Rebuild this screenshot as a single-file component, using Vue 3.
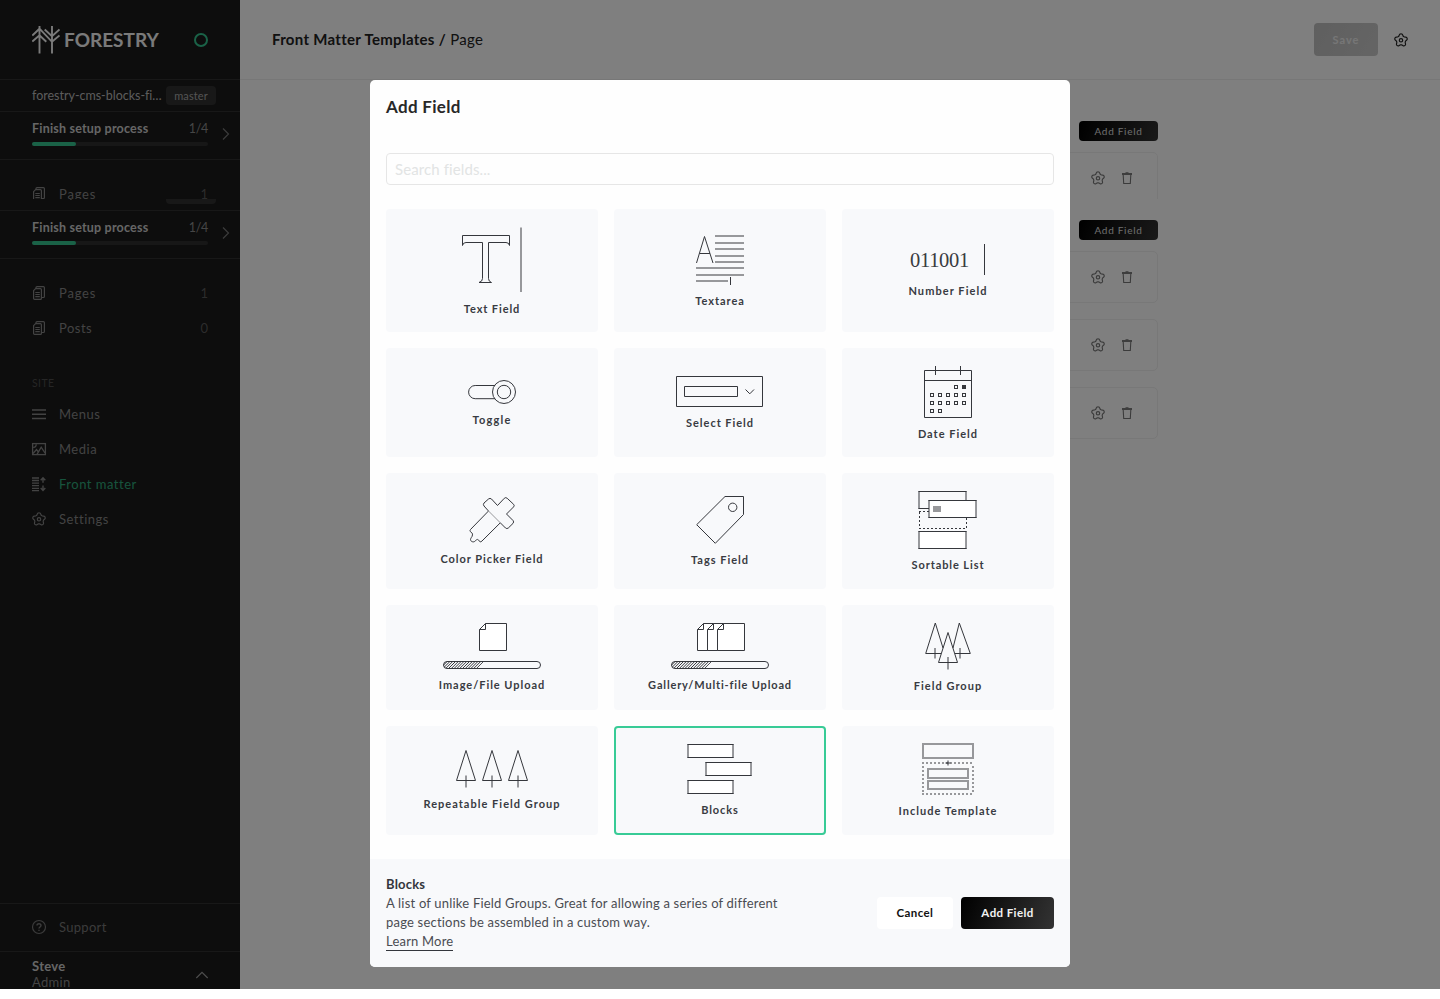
<script setup>
const mainLinks = [
  { label: 'Pages', count: '1' },
  { label: 'Posts', count: '0' }
]
const siteLinks = [
  { label: 'Menus', icon: 'menu' },
  { label: 'Media', icon: 'media' },
  { label: 'Front matter', icon: 'matter', active: true },
  { label: 'Settings', icon: 'gear' }
]
const tiles = [
  { id: 'text', label: 'Text Field', h: 92, ls: 0.9 },
  { id: 'textarea', label: 'Textarea', h: 84, ls: 0.95 },
  { id: 'number', label: 'Number Field', h: 74, ls: 1.07 },
  { id: 'toggle', label: 'Toggle', h: 64, ls: 1.2 },
  { id: 'select', label: 'Select Field', h: 67, ls: 0.95 },
  { id: 'date', label: 'Date Field', h: 78, ls: 1 },
  { id: 'color', label: 'Color Picker Field', h: 78, ls: 0.96 },
  { id: 'tags', label: 'Tags Field', h: 79, ls: 1 },
  { id: 'sortable', label: 'Sortable List', h: 84, ls: 0.9 },
  { id: 'image', label: 'Image/File Upload', h: 72, ls: 0.96 },
  { id: 'gallery', label: 'Gallery/Multi-file Upload', h: 72, ls: 0.84 },
  { id: 'group', label: 'Field Group', h: 73, ls: 1.03 },
  { id: 'repeat', label: 'Repeatable Field Group', h: 70, ls: 1.03 },
  { id: 'blocks', label: 'Blocks', h: 76, ls: 0.9, selected: true },
  { id: 'include', label: 'Include Template', h: 77, ls: 1 }
]
const dayCells = [
  [114, 39], [90, 47], [98, 47], [106, 47], [114, 47], [122, 47],
  [90, 55], [98, 55], [106, 55], [114, 55], [122, 55], [90, 63], [98, 63]
]
const textLines = [[101, 27], [101, 34], [101, 40], [101, 47], [101, 53], [82, 59], [82, 66]]
const hatch = Array.from({ length: 18 }, (_, i) => 48 + i * 2.8)

// Five-petal outline: a circle whose radius swells once per petal.
const gear = 'M' + Array.from({ length: 60 }, (_, i) => {
  const a = (i / 60) * Math.PI * 2
  const c = Math.cos(5 * a)
  const r = 5.5 + 0.95 * Math.sign(c) * Math.pow(Math.abs(c), 0.6)
  return `${(8 + r * Math.sin(a)).toFixed(2)} ${(8.3 - r * Math.cos(a)).toFixed(2)}`
}).join('L') + 'Z'
</script>

<template>
  <div class="app">
    <svg class="defs" width="0" height="0" aria-hidden="true">
      <symbol id="i-gear" viewBox="0 0 16 16">
        <path :d="gear" fill="none" stroke="currentColor" stroke-width="1.150" stroke-linejoin="round" />
        <circle cx="8" cy="8.300" r="1.700" fill="none" stroke="currentColor" stroke-width="1.200" />
      </symbol>
      <symbol id="i-pages" viewBox="0 0 16 16">
        <g fill="none" stroke="currentColor" stroke-width="1.200">
          <path d="M2.600 5.600 4.600 3.600H9.400a1 1 0 0 1 1 1V13.400a1 1 0 0 1-1 1H3.600a1 1 0 0 1-1-1z" />
          <path d="M5 3V2.600a1 1 0 0 1 1-1H12.400a1 1 0 0 1 1 1V11.500a1 1 0 0 1-1 1H11" />
          <path d="M4.300 7.500h4.500M4.300 9.500h4.500M4.300 11.700h4.500" />
        </g>
      </symbol>
      <symbol id="i-menu" viewBox="0 0 16 16">
        <path d="M1 4h14M1 8.300h14M1 12.500h14" stroke="currentColor" stroke-width="1.600" />
      </symbol>
      <symbol id="i-media" viewBox="0 0 16 16">
        <g fill="none" stroke="currentColor" stroke-width="1.300">
          <rect x="1.600" y="2.600" width="12.800" height="11" />
          <path d="M2 12.500 5.500 8.500 7 10.500M6 13.300 10.200 6.200 14 12" />
          <path d="M2.200 6.300c1.800.2 3-.8 3-3" />
        </g>
      </symbol>
      <symbol id="i-matter" viewBox="0 0 16 16">
        <path d="M1 2h7M1 4.500h7M1 7.100h7M1 9.700h7M1 12.300h7M1 14.600h7" stroke="currentColor" stroke-width="1.300" />
        <path d="M12 2v4.700M9.700 4.300 12 1.800l2.300 2.500M12 9.500V14M9.700 12 12 14.400l2.300-2.400" fill="none" stroke="currentColor" stroke-width="1.400" />
      </symbol>
      <symbol id="i-trash" viewBox="0 0 12 14">
        <path d="M1 3h10" stroke="currentColor" stroke-width="1.900" />
        <path d="M4.500 1.700h3M2.200 4l.5 8.500h6.600l.5-8.500" fill="none" stroke="currentColor" stroke-width="1.100" />
      </symbol>
    </svg>

    <aside class="sidebar">
      <div class="brand">
        <svg class="tree-logo" width="28" height="28" viewBox="0 0 28 28" fill="none" stroke="currentColor" stroke-width="1.900">
          <path d="M7.500 0v27.500M20 0v27.500M.3 9.500 7.500 2.700 20 15.800 27.500 9.500M.3 15.600 7.500 9.200 14.300 15.800M12.700 3.500 20 10.200 27.500 3.500" />
        </svg>
        <span class="brand-name">FORESTRY</span>
        <span class="ring"></span>
      </div>
      <div class="repo">
        <span class="repo-name">forestry-cms-blocks-fi…</span>
        <span class="badge">master</span>
      </div>
      <div class="setup">
        <div class="setup-body">
          <div class="setup-line"><b>Finish setup process</b><span>1/4</span></div>
          <div class="bar"><i></i></div>
        </div>
        <svg class="chev" width="8" height="14" viewBox="0 0 8 14"><path d="M1 1.500 6.500 7 1 12.500" /></svg>
      </div>
      <div class="clip-nav">
        <div class="nav-item">
          <svg width="16" height="16"><use href="#i-pages" /></svg><span>Pages</span><em>1</em>
        </div>
      </div>
      <div class="repo repo-tail">
        <span class="repo-name">forestry-cms-blocks-fi…</span>
        <span class="badge"></span>
      </div>
      <div class="setup">
        <div class="setup-body">
          <div class="setup-line"><b>Finish setup process</b><span>1/4</span></div>
          <div class="bar"><i></i></div>
        </div>
        <svg class="chev" width="8" height="14" viewBox="0 0 8 14"><path d="M1 1.500 6.500 7 1 12.500" /></svg>
      </div>
      <nav class="nav">
        <div v-for="l in mainLinks" :key="l.label" class="nav-item">
          <svg width="16" height="16"><use href="#i-pages" /></svg><span>{{ l.label }}</span><em>{{ l.count }}</em>
        </div>
        <div class="nav-head">SITE</div>
        <div v-for="l in siteLinks" :key="l.label" class="nav-item" :class="{ active: l.active }">
          <svg width="16" height="16"><use :href="'#i-' + l.icon" /></svg><span>{{ l.label }}</span>
        </div>
      </nav>
      <div class="support">
        <svg width="16" height="16" viewBox="0 0 16 16" fill="none" stroke="currentColor" stroke-width="1.200">
          <circle cx="8" cy="8" r="6.500" />
          <path d="M6 6.600c0-2.600 4-2.500 4 0 0 1.400-2 1.400-2 3M8 10.700v1.200" stroke-width="1.400" />
        </svg>
        <span>Support</span>
      </div>
      <div class="user">
        <div><b>Steve</b><span>Admin</span></div>
        <svg width="14" height="8" viewBox="0 0 14 8"><path d="M1.300 7 7 1.300 12.700 7" /></svg>
      </div>
    </aside>

    <main class="main">
      <header class="top">
        <h1><b>Front Matter Templates /</b> Page</h1>
        <button class="save">Save</button>
        <svg width="16" height="16"><use href="#i-gear" /></svg>
      </header>
      <div class="column first">
        <button class="add">Add Field</button>
        <div class="row">
          <svg width="16" height="16"><use href="#i-gear" /></svg>
          <svg width="12" height="14"><use href="#i-trash" /></svg>
        </div>
      </div>
      <div class="column">
        <button class="add">Add Field</button>
        <div v-for="n in 3" :key="n" class="row">
          <svg width="16" height="16"><use href="#i-gear" /></svg>
          <svg width="12" height="14"><use href="#i-trash" /></svg>
        </div>
      </div>
    </main>

    <div class="overlay">
      <section class="modal">
        <h2>Add Field</h2>
        <input class="search" placeholder="Search fields..." />
        <div class="grid">
          <div v-for="t in tiles" :key="t.id" class="tile" :class="{ selected: t.selected }">
            <svg class="art" width="212" :height="t.h" :viewBox="'0 0 212 ' + t.h">
              <g v-if="t.id === 'text'">
                <path d="M76.500 26.500H123.500V36.500Q123 33.500 120 33.500H102.500V69.500Q102.500 72.500 105.500 73.500H93Q96.500 72.500 96.500 69.500V33.500H80Q77 33.500 76.500 36.500Z" />
                <path class="soft" d="M135 18.500V83" />
              </g>
              <g v-else-if="t.id === 'textarea'">
                <path v-for="(l, i) in textLines" :key="i" class="soft" :d="`M${l[0]} ${l[1]}H130`" />
                <path class="soft" d="M82 72H114" />
                <path d="M116.500 68V76M82.500 54 90.500 27.500 99 54M85.500 44.500H96" />
              </g>
              <g v-else-if="t.id === 'number'">
                <text x="68" y="58">011001</text>
                <path d="M142.500 35V66" />
              </g>
              <g v-else-if="t.id === 'toggle'">
                <path d="M109 37.500H89.200a6.600 6.600 0 0 0 0 13.200H109" />
                <circle cx="118" cy="44" r="11.500" /><circle cx="118" cy="44" r="6.700" />
              </g>
              <g v-else-if="t.id === 'select'">
                <path d="M62.500 28.500H148.500V58.500H62.500ZM70.500 38.500H123.500V48.500H70.500ZM131.500 41.500 135.800 45.800 140 41.500" />
              </g>
              <g v-else-if="t.id === 'date'">
                <path d="M82.500 22.500H129.500V69.500H82.500ZM82.500 32.500H129.500M93.500 18V27M118.500 18V27" />
                <rect v-for="(c, i) in dayCells" :key="i" :x="c[0] - 1.5" :y="c[1] - 1.5" width="3" height="3" />
                <rect class="solid" x="120.500" y="37.500" width="3" height="3" />
              </g>
              <g v-else-if="t.id === 'color'">
                <path d="M98 33Q96.800 31.500 98 30L102.500 26Q104 24.700 105.500 26L111.500 32.500 118.300 25.300Q119.700 23.900 121.200 25.300L127.600 31.300Q128.800 32.500 127.600 33.900L120.500 41 127 47.500Q128.300 49 127 50.400L122.300 55Q120.800 56.200 119.500 55L114.300 49.800 96 68C94.700 69.300 93.700 69 93.200 67.800 91.500 65.500 90.500 66.500 89.500 67.800 88 69.300 86.500 69 85.500 68.300 83.500 67 85 65 86 63.500 87 61 86.500 60.200 85 59.200 83.500 58.200 84 57 84.500 56.500L102.500 38Z" />
                <path class="faint" d="M102.500 38 114.300 49.800" />
              </g>
              <g v-else-if="t.id === 'tags'">
                <path d="M111 23.500H129.500V41.500L101.300 70.300 82.700 51.700Z" />
                <circle cx="118.700" cy="34.300" r="4.200" />
              </g>
              <g v-else-if="t.id === 'sortable'">
                <path d="M76.500 18.500H124.500M76.500 35.500H87" /><path class="side" d="M77 18V36M124 18V27" />
                <path class="dots" d="M77 38.500H87M77 55.500H125M77.500 39V56M124.500 45V56" />
                <rect class="plain" x="87" y="27" width="47" height="18" />
                <path d="M86.500 27.500H134.500M86.500 44.500H134.500" /><path class="side" d="M87 27V45M134 27V45" />
                <rect class="grayfill" x="91" y="33" width="8" height="6" />
                <rect class="plain" x="77" y="58" width="47" height="18" />
                <path d="M76.500 58.500H124.500M76.500 75.500H124.500" /><path class="side" d="M77 58V76M124 58V76" />
              </g>
              <g v-else-if="t.id === 'image' || t.id === 'gallery'">
                <template v-if="t.id === 'image'">
                  <path class="paper" d="M99.500 18.500H120.500V45.500H93.500V24.500Z" /><path d="M99.500 18.500V24.500H93.500" />
                </template>
                <template v-else>
                  <path class="paper" d="M89.500 18.500H110.500V45.500H83.500V24.500Z" /><path d="M89.500 18.500V24.500H83.500" />
                  <path class="paper" d="M99.500 18.500H120.500V45.500H93.500V24.500Z" /><path d="M99.500 18.500V24.500H93.500" />
                  <path class="paper" d="M109.500 18.500H130.500V45.500H103.500V24.500Z" /><path d="M109.500 18.500V24.500H103.500" />
                </template>
                <clipPath :id="'clip-' + t.id"><path d="M61 56.500H98L91 63.500H61a3.500 3.500 0 0 1 0-7z" /></clipPath>
                <g :clip-path="`url(#clip-${t.id})`">
                  <path v-for="x in hatch" :key="x" :d="`M${x} 64l8-8`" />
                </g>
                <rect x="57.500" y="56.500" width="97" height="7" rx="3.500" />
              </g>
              <g v-else-if="t.id === 'group'">
                <path d="M99 48.500H83.700L93.300 18 101 43M111 43 117.300 18 128.300 48.500H113" />
                <path d="M106 27.500 96.500 57.500H115.500Z" />
                <path class="stem" d="M93 43V53.500M118 43V53.500M106 52V64.500" />
              </g>
              <g v-else-if="t.id === 'repeat'">
                <g v-for="x in [80, 106, 132]" :key="x">
                  <path :d="`M${x} 24.500 ${x - 9.5} 54.500H${x + 9.5}Z`" /><path class="stem" :d="`M${x} 49.500V61.500`" />
                </g>
              </g>
              <g v-else-if="t.id === 'blocks'">
                <g v-for="b in [[74, 18], [92, 36], [74, 54]]" :key="b[1]">
                  <rect class="plain" :x="b[0]" :y="b[1]" width="45" height="14" />
                  <path class="side" :d="`M${b[0]} ${b[1]}v14M${b[0] + 45} ${b[1]}v14`" />
                  <path :d="`M${b[0] - 0.5} ${b[1] + 0.5}h46M${b[0] - 0.5} ${b[1] + 13.5}h46`" />
                </g>
              </g>
              <g v-else>
                <path class="soft" d="M81 18H131V32H81ZM86 43H126V52H86ZM86 55H126V63H86Z" />
                <path class="soft dash2" d="M80 37H132M80 68H132M81 40V67M131 40V67" />
                <path class="stem" d="M103.500 37H108.500M106 34.500V39.500" />
              </g>
            </svg>
            <span class="label" :style="{ letterSpacing: t.ls + 'px' }">{{ t.label }}</span>
          </div>
        </div>
        <footer class="foot">
          <div class="desc">
            <b>Blocks</b>
            <p>A list of unlike Field Groups. Great for allowing a series of different</p>
            <p>page sections be assembled in a custom way.</p>
            <a>Learn More</a>
          </div>
          <button class="cancel">Cancel</button>
          <button class="confirm">Add Field</button>
        </footer>
      </section>
    </div>
  </div>
</template>

<style>
body { background: #fff; }
</style>

<style scoped>
.app { position: relative; display: flex; height: 989px; overflow: hidden; font-family: Lato, "Open Sans", sans-serif; color: #222; }
.defs { position: absolute; }
*, *::before { box-sizing: border-box; }
button { font-family: inherit; border: 0; padding: 0; }

.sidebar { width: 240px; flex: none; display: flex; flex-direction: column; background: #1a1a1a; color: #fff; }
.brand { height: 80px; flex: none; display: flex; align-items: center; padding: 0 32px; border-bottom: 1px solid #303030; color: #f4f4f4; }
.brand-name { margin-left: 4px; font-size: 19px; font-weight: 700; letter-spacing: 0; }
.ring { width: 14px; height: 14px; margin-left: auto; border: 2px solid #35c48f; border-radius: 50%; }
.repo { height: 32px; flex: none; display: flex; align-items: center; padding: 0 24px 0 32px; border-bottom: 1px solid #303030; }
.repo-name { width: 134px; font-size: 12.500px; letter-spacing: -.02px; line-height: 16px; color: #b8b8b8; white-space: nowrap; }
.badge { width: 50px; height: 19px; border-radius: 4px; background: #303030; color: #a8a8a8; font-size: 11px; line-height: 19px; text-align: center; letter-spacing: .1px; }
.repo-tail { height: 12px; align-items: flex-start; overflow: hidden; }
.repo-tail .repo-name { margin-top: -13px; color: #999; }
.repo-tail .badge { margin-top: -14px; }
.setup { height: 48px; flex: none; display: flex; padding-left: 32px; border-bottom: 1px solid #303030; }
.setup-body { width: 176px; }
.setup-line { display: flex; justify-content: space-between; height: 30px; line-height: 33px; font-size: 12.500px; letter-spacing: .2px; color: #ccc; }
.setup-line span { color: #8c8c8c; letter-spacing: -.3px; }
.bar { height: 4px; border-radius: 2px; background: #2e2e2e; }
.bar i { display: block; width: 25%; height: 4px; border-radius: 2px; background: #35c48f; }
.chev { margin: 15px 0 0 14px; fill: none; stroke: #777; stroke-width: 1.200; }
.clip-nav { height: 39px; padding-top: 16px; flex: none; overflow: hidden; }
.nav { padding-top: 16px; flex: 1; }
.nav-item { display: flex; align-items: center; height: 35px; padding: 0 32px 0 31px; color: #868686; font-size: 13px; letter-spacing: .5px; }
.nav-item:first-child span { letter-spacing: .8px; }
.nav-item span { margin-left: 12px; }
.nav-item em { margin-left: auto; font-style: normal; color: #585858; letter-spacing: 0; }
.nav-item.active span { color: #2fa87b; }
.nav-head { height: 51px; padding: 30px 0 0 32px; font-size: 10.500px; line-height: 16px; letter-spacing: .4px; color: #4c4c4c; }
.support { height: 48px; flex: none; display: flex; align-items: center; padding: 0 0 1px 31px; border-top: 1px solid #303030; color: #777; font-size: 13px; letter-spacing: .3px; }
.support span { margin-left: 12px; }
.user { height: 38px; flex: none; display: flex; justify-content: space-between; padding: 6px 31px 0 32px; border-top: 1px solid #303030; font-size: 13px; line-height: 16px; }
.user b, .user span { display: block; letter-spacing: .3px; }
.user b { color: #ccc; }
.user span { color: #888; }
.user svg { margin-top: 13px; fill: none; stroke: #999; stroke-width: 1.200; }

.main { flex: 1; }
.top { height: 80px; display: flex; align-items: center; padding: 0 31px 0 32px; border-bottom: 1px solid #eee; }
h1 { margin: -2px auto 0 0; font-size: 15px; font-weight: 400; letter-spacing: .3px; }
.save { width: 64px; height: 33px; margin-right: 15px; border-radius: 4px; background: linear-gradient(120deg, #bfbfbf, #cacaca); color: #ededed; font-size: 11px; font-weight: 700; letter-spacing: 1px; }
.column { width: 636px; margin: 0 auto; padding-top: 21px; display: flex; flex-direction: column; }
.first { height: 119px; padding-top: 41px; overflow: hidden; }
.add { align-self: flex-end; width: 79px; height: 20px; flex: none; margin-bottom: 11px; border-radius: 4px; background: linear-gradient(110deg, #000, #333); color: #ddd; font-size: 10px; line-height: 19px; letter-spacing: .7px; }
.row { height: 52px; flex: none; margin-bottom: 16px; display: flex; align-items: center; justify-content: flex-end; gap: 15px; padding-right: 24px; border: 1px solid #f0f0f0; border-radius: 5px; color: #777; }

.overlay { position: absolute; inset: 0; display: flex; justify-content: center; align-items: flex-start; padding-top: 80px; background: rgba(0, 0, 0, .5); }
.modal { width: 700px; height: 887px; display: flex; flex-direction: column; border-radius: 5px; overflow: hidden; background: #fefefe; }
h2 { margin: 0; height: 73px; flex: none; padding: 15px 16px 0; font-size: 17px; line-height: 24px; font-weight: 700; letter-spacing: .3px; color: #282828; }
.search { height: 32px; flex: none; margin: 0 16px 24px; padding: 0 8px; border: 1px solid #e6e6e6; border-radius: 4px; font: 15px Lato, sans-serif; background: #fefefe; letter-spacing: .1px; }
.search::placeholder { color: #e2e4e4; opacity: 1; }
.grid { display: grid; grid-template-columns: repeat(3, 212px); grid-template-rows: 123px 109px 116px 105px 109px; gap: 16px; margin: 0 16px 24px; }
.tile { display: flex; flex-direction: column; align-items: center; border-radius: 4px; background: #f8f9fb; overflow: hidden; }
.tile.selected { box-shadow: inset 0 0 0 2px #38cb96; }
.art { flex: none; fill: none; stroke: #35373c; stroke-width: 1; overflow: visible; }
.art text { font: 20.500px "Liberation Serif", serif; letter-spacing: -.3px; fill: #3a3c40; stroke: none; }
.soft { stroke: #97989b; stroke-width: 2; }
.side { stroke: #35373c; stroke-width: 1; }
.stem { stroke: #35373c; stroke-width: 1; }
.faint { stroke: #97989b; }
.dots { stroke-dasharray: 2 2; }
.dash2 { stroke-dasharray: 2 2; }
.plain { fill: #fff; stroke: none; }
.paper { fill: #fff; }
.solid { fill: #35373c; }
.grayfill { fill: #97989b; stroke: none; }
.label { font-size: 11px; line-height: 16px; font-weight: 700; white-space: nowrap; color: #383b42; }
.foot { flex: 1; display: flex; padding: 16px 16px 0; background: #f8f9fb; }
.desc { margin-right: auto; font-size: 13px; line-height: 19px; letter-spacing: .2px; color: #4a4c52; }
.desc b { display: block; height: 19px; line-height: 18px; color: #33363c; }
.desc p { margin: 0; white-space: nowrap; }
.desc a { display: block; width: fit-content; height: 19px; border-bottom: 1px solid #33363c; }
.foot button { height: 32px; margin-top: 22px; border-radius: 4px; font-size: 11.500px; font-weight: 700; letter-spacing: .4px; line-height: 30px; }
.cancel { width: 76px; margin-right: 8px; background: #fff; color: #111; }
.confirm { width: 93px; background: linear-gradient(110deg, #000, #333); color: #f2f2f2; }
</style>
